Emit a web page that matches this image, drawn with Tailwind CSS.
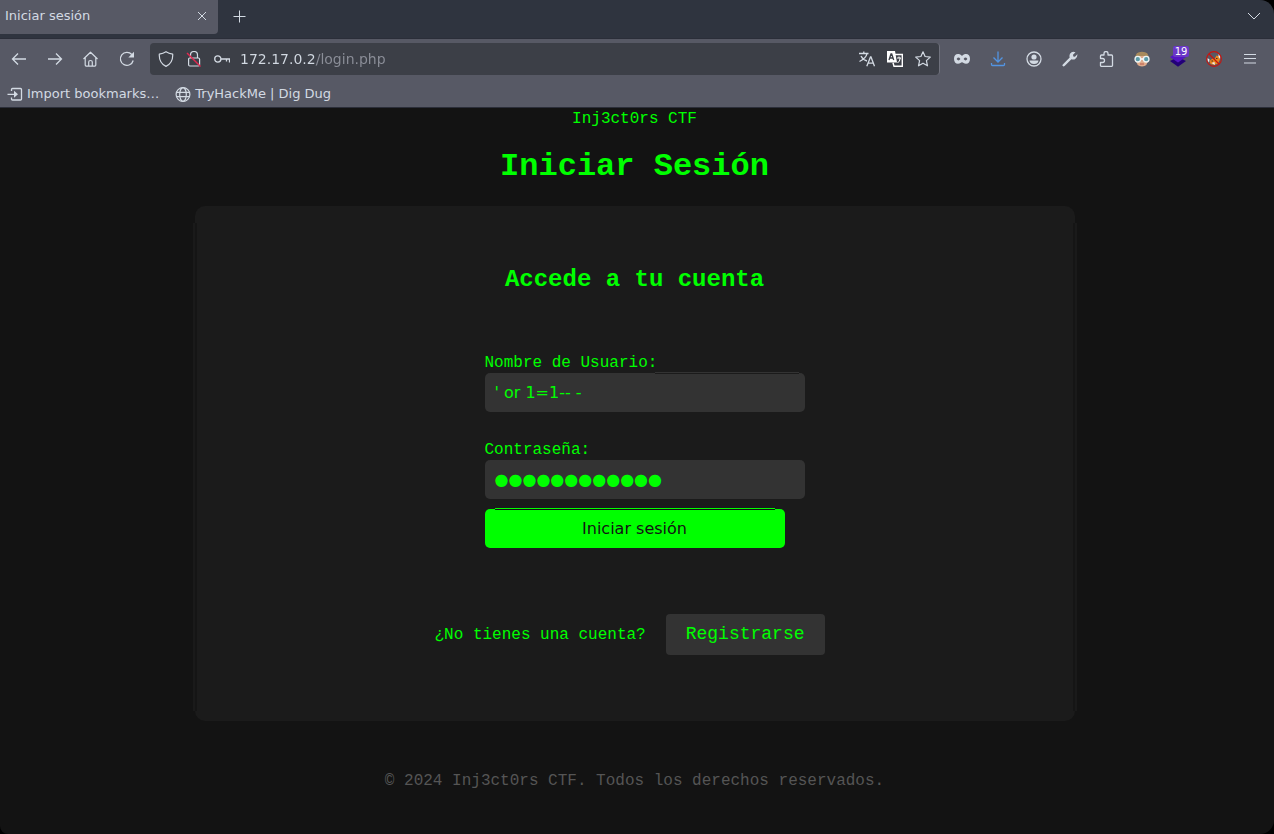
<!DOCTYPE html>
<html lang="es">
<head>
<meta charset="utf-8">
<meta name="viewport" content="width=device-width, initial-scale=1">
<title>Iniciar sesión</title>
<script src="https://cdn.jsdelivr.net/npm/@tailwindcss/browser@4"></script>
</head>
<body class="bg-black font-['DejaVu_Sans',sans-serif]">
<div class="flex min-h-screen flex-col overflow-hidden rounded-tr-[14px] rounded-br-[14px] rounded-bl-lg bg-[#131313]">

  <!-- Browser chrome -->
  <header class="text-[#d3dae3]">
    <div class="flex h-[39px] items-start border-b border-[#2b2e39] bg-[#2f343f]">
      <div class="flex h-[34px] w-[218px] items-center justify-between rounded-br bg-[#575965] pr-[11px] pb-[2px] pl-[5px] text-[13px]">
        <span>Iniciar sesión</span>
        <button type="button" aria-label="Cerrar pestaña">
          <svg class="size-[10px]" viewBox="0 0 10 10" fill="none" stroke="currentColor"><path d="M1 1l8 8M9 1L1 9"/></svg>
        </button>
      </div>
      <button type="button" aria-label="Nueva pestaña" class="ml-[15px] flex h-[33px] items-center">
        <svg class="size-[13px]" viewBox="0 0 13 13" fill="none" stroke="currentColor"><path d="M6.500 .5v12M.5 6.500h12"/></svg>
      </button>
      <button type="button" aria-label="Lista de pestañas" class="mr-[13px] ml-auto flex h-8 items-center">
        <svg class="size-[14px]" viewBox="0 0 14 14" fill="none" stroke="currentColor"><path d="M1 4l6 6 6-6"/></svg>
      </button>
    </div>

    <div class="border-b border-[#2b2e39] bg-[#575965]">
      <div class="flex h-[40px] items-center">
        <nav class="flex w-[150px] items-center gap-5 pl-[11px]" aria-label="Navegación">
          <button type="button" aria-label="Atrás"><svg class="size-4" viewBox="0 0 16 16" fill="none" stroke="currentColor" stroke-width="1.300"><path d="M15 8H1.500M7 2.500L1.500 8 7 13.500"/></svg></button>
          <button type="button" aria-label="Adelante"><svg class="size-4" viewBox="0 0 16 16" fill="none" stroke="currentColor" stroke-width="1.300"><path d="M1 8h13.500M9 2.500L14.500 8 9 13.500"/></svg></button>
          <button type="button" aria-label="Inicio"><svg class="size-4" viewBox="0 0 16 16" fill="none" stroke="currentColor" stroke-width="1.200" stroke-linejoin="round"><path d="M.5 8L7.500 1.200 14.500 8M2.200 6.800v7.300q0 1 1 1h8.600q1 0 1-1V6.800M5.700 15v-4q0-1.500 1.800-1.500T9.300 11v4"/></svg></button>
          <button type="button" aria-label="Recargar"><svg class="size-4" viewBox="0 0 16 16" fill="none" stroke="currentColor" stroke-width="1.300"><path d="M14.200 9.500A6.500 6.500 0 1 1 12.800 3.500"/><path d="M15 .8v5.700H9.300z" fill="currentColor" stroke="none"/></svg></button>
        </nav>

        <div class="flex h-8 flex-1 items-center rounded border-r border-[#70727d] bg-[#3c3f47] pr-2 pl-2">
          <svg class="size-4" viewBox="0 0 16 16" fill="none" stroke="currentColor" stroke-width="1.200" stroke-linejoin="round"><path d="M8 .7Q10.800 2.500 14.700 3.200C15 8.500 13 13 8 15.400 3 13 1 8.500 1.300 3.200Q5.200 2.500 8 .7z"/></svg>
          <svg class="ml-3 size-4" viewBox="0 0 16 16" fill="none" stroke="currentColor" stroke-width="1.200"><path d="M4.500 7V4a3.500 3.500 0 0 1 7 0v3"/><rect x="2.600" y="7" width="11" height="8" rx="1.200"/><path d="M1 2l13.500 13.500" stroke="#e22850" stroke-width="1.400"/></svg>
          <svg class="ml-3 size-4" viewBox="0 0 16 16" fill="none" stroke="currentColor" stroke-width="1.300"><circle cx="3.800" cy="8" r="3.100"/><path d="M7 8h8.500v3.500M12.500 8v2.500"/></svg>
          <input type="text" aria-label="Dirección" value="172.17.0.2/login.php" class="ml-[10px] min-w-0 flex-1 bg-[linear-gradient(90deg,#d3dae3_76px,#8b8e98_76px)] bg-clip-text text-[14px] text-transparent outline-none">
          <div class="flex items-center gap-3">
            <button type="button" aria-label="Traducir página"><svg class="size-4" viewBox="0 0 16 16" fill="none" stroke="currentColor" stroke-width="1.300"><path d="M0 2.500h9.500M4.800.5v2M2 5Q4 9 8 10M8 2.700Q7 7.500.5 10.500M7.800 15.300L11.500 6h.5l3.500 9.300M9 12.200h5.300"/></svg></button>
            <button type="button" aria-label="Traducir"><svg class="size-4" viewBox="0 0 16 16"><path d="M0 0h8l2 11.500H0z" fill="#fff"/><path d="M8 3.500h7.300v11.800H7l-1-3.500" fill="none" stroke="#fff" stroke-width="1.400"/><path d="M2 9l2-6h.7l2 6M2.800 7h3" fill="none" stroke="#3c3f47" stroke-width="1.300"/><path d="M10 7h4M12 5.500V7M10.500 12q2.500-1.500 2.700-5" fill="none" stroke="#fff"/></svg></button>
            <button type="button" aria-label="Guardar marcador"><svg class="size-4" viewBox="0 0 16 16" fill="none" stroke="currentColor" stroke-width="1.200" stroke-linejoin="round"><path d="M8 .8l2.100 4.700 5.200.6-3.900 3.500 1.100 5.200L8 12.200l-4.500 2.600 1.100-5.200L.7 6.100l5.200-.6z"/></svg></button>
          </div>
        </div>

        <div class="flex items-center gap-5 pr-4 pl-[14px]">
          <button type="button" aria-label="Privacidad"><svg class="size-4" viewBox="0 0 16 16" fill="currentColor" fill-rule="evenodd"><path d="M8 5C9.300 3.600 10.600 3 12 3 14.500 3 16 5 16 7.800c0 3-1.500 5-4 5-2 0-3-1.600-4-1.600s-2 1.600-4 1.600c-2.500 0-4-2-4-5C0 5 1.500 3 4 3 5.400 3 6.700 3.600 8 5zM2.600 8Q4.500 10.800 6.400 8 4.500 5.200 2.600 8zM9.600 8Q11.500 10.800 13.400 8 11.500 5.200 9.600 8z"/></svg></button>
          <button type="button" aria-label="Descargas"><svg class="size-4" viewBox="0 0 16 16" fill="none" stroke="#5294e2" stroke-width="1.300"><path d="M8 .5V11M3.500 6.500L8 11l4.500-4.500M1.500 12v1.500q0 1 1 1h11q1 0 1-1V12"/></svg></button>
          <button type="button" aria-label="Cuenta"><svg class="size-4" viewBox="0 0 16 16"><circle cx="8" cy="8" r="7" fill="none" stroke="currentColor" stroke-width="1.300"/><circle cx="8" cy="6" r="2.600" fill="currentColor"/><path d="M3.500 9.500h9Q12 13 8 13T3.500 9.500z" fill="currentColor"/></svg></button>
          <button type="button" aria-label="Herramientas"><svg class="size-4" viewBox="0 0 16 16"><path d="M13.500 1.200L11 3.800l.3 1.700 1.600.3 2.500-2.500Q15.600 7 13 8.200q-2 .8-3.600 0l-6.800 6.900q-1.200.8-1.900 0-.6-.8.1-1.700L7.700 6.600Q7 4.500 8.200 2.500 10-.2 13.500 1.200z" fill="currentColor"/></svg></button>
          <button type="button" aria-label="Extensiones"><svg class="size-4" viewBox="0 0 16 16" fill="none" stroke="currentColor" stroke-width="1.300" stroke-linejoin="round"><path d="M2.500 7.500V5q0-1 1-1H6V2.500a2 2 0 0 1 4 0V4h3.500q1 0 1 1v9.500q0 .8-.8.8H3.300q-.8 0-.8-.8v-3h2a2 2 0 0 0 0-4z"/></svg></button>
          <button type="button" aria-label="Perfil"><svg class="size-4" viewBox="0 0 16 16"><path d="M2 8Q2 15.500 8 15.500T14 8l-1-4H3z" fill="#e0ab8b"/><path d="M1.500 7Q1 .8 8 .8T14.500 7L12 5H4z" fill="#a88a5c"/><path d="M6 8h4" stroke="#fff" stroke-width="1.500"/><circle cx="3.800" cy="8.200" r="2.800" fill="#5b9ba8" stroke="#eef4f4" stroke-width="1.300"/><circle cx="12.200" cy="8.200" r="2.800" fill="#5b9ba8" stroke="#eef4f4" stroke-width="1.300"/><path d="M6 13h4" stroke="#b75b4d"/></svg></button>
          <button type="button" aria-label="Wappalyzer, 19" class="relative"><svg class="size-4" viewBox="0 0 16 16"><path d="M0 10l8-4 8 4-8 5.800z" fill="#230078"/><path d="M0 6l8-5 8 5-8 5.500z" fill="#5516c4"/></svg><span class="absolute -top-[5px] left-[3px] h-[11px] w-4 rounded-xs bg-[#6b38c8] text-center text-[10px] leading-[11px] text-white">19</span></button>
          <button type="button" aria-label="FoxyProxy desactivado"><svg class="size-4" viewBox="0 0 16 16"><path d="M3.500 10l3-2.500 2 .5 2-3.500 3 1 .5 3-2 4-4 1.500-3.500-1z" fill="#e9851d"/><path d="M1.500 7l2 1.500-.5 3-1.500-2zM12.500 3l2 2.500-.5 2.500-1.500-2zM5.500 12l3-1 .5 3z" fill="#eee"/><path d="M5.500 10h1.500M10 7.500h1.500" stroke="#4a3024" stroke-width="1.200"/><circle cx="8" cy="8" r="7.400" fill="none" stroke="#c8140e" stroke-width="1.100"/><path d="M3 3l10 10" stroke="#c8140e" stroke-width="1.200"/></svg></button>
          <button type="button" aria-label="Menú"><svg class="size-4" viewBox="0 0 16 16" fill="none" stroke="currentColor" stroke-width="1.200"><path d="M2 3.500h12M2 7.500h12M2 12h12"/></svg></button>
        </div>
      </div>

      <nav class="flex h-7 items-center gap-4 pt-px pl-[7px] text-[13px]" aria-label="Marcadores">
        <a href="#" class="flex items-center gap-1"><svg class="size-4" viewBox="0 0 16 16" fill="none" stroke="currentColor" stroke-width="1.300"><path d="M4.500 5V3.500q0-1 1-1h8q1 0 1 1v9.500q0 1-1 1h-8q-1 0-1-1v-1.500M.5 8.300H8"/><path d="M7 4.800l4 3.500-4 3.500z" fill="currentColor" stroke="none"/></svg>Import bookmarks…</a>
        <a href="#" class="flex items-center gap-1"><svg class="size-4" viewBox="0 0 16 16" fill="none" stroke="currentColor" stroke-width="1.200"><circle cx="8" cy="8.500" r="6.900"/><ellipse cx="8" cy="8.500" rx="3.300" ry="6.900"/><path d="M1.500 6.300h13M1.500 10.700h13"/></svg>TryHackMe | Dig Dug</a>
      </nav>
    </div>
  </header>

  <!-- Page -->
  <div class="flex flex-1 flex-col items-center pt-px pr-[5px] font-['Liberation_Mono',monospace] text-[16px] leading-5 text-[#00ff00]">
    <p>Inj3ct0rs CTF</p>
    <h1 class="mt-5 text-[32px] leading-9 font-bold">Iniciar Sesión</h1>

    <main class="relative mt-[21px] flex w-full max-w-[880px] flex-col items-center rounded-[10px] bg-[#1b1b1b] pt-[60px] pb-[66px]">
      <span class="absolute top-[17px] bottom-[10px] -left-[2px] w-1 border-r-2 border-l-2 border-r-[#151515] border-l-[#1a1a1a]"></span>
      <span class="absolute top-[17px] -right-[2px] bottom-[10px] w-1 border-r-2 border-l-2 border-r-[#1a1a1a] border-l-[#151515]"></span>
      <h2 class="text-[24px] leading-7 font-bold">Accede a tu cuenta</h2>

      <form class="mt-[57px] flex w-[300px] flex-col items-start">
        <label for="user" class="pt-[2px]">Nombre de Usuario:</label>
        <div class="relative">
          <input id="user" type="text" value="' or 1=1-- -" class="block h-[39px] w-[320px] rounded-[5px] bg-[#333333] px-[10px] font-['DejaVu_Sans',sans-serif] outline-none">
          <span class="absolute -top-px right-[6px] left-[170px] h-[2px] border-t border-[#333333] bg-[#1b1b1b]"></span>
        </div>
        <label for="pass" class="mt-[26px] pt-[2px]">Contraseña:</label>
        <div class="relative font-['DejaVu_Sans',sans-serif]">
          <input id="pass" type="password" value="' or 1=1-- -" class="block h-[39px] w-[320px] rounded-[5px] bg-[#333333] px-[10px] text-transparent outline-none">
          <span aria-hidden="true" class="pointer-events-none absolute inset-0 px-[10px] leading-[39px]">●●●●●●●●●●●●</span>
        </div>
        <button type="submit" class="relative mt-[10px] h-[39px] w-full rounded-[5px] bg-[#00ff00] font-['DejaVu_Sans',sans-serif] text-[#131313]">Iniciar sesión<span class="absolute inset-x-[10px] -top-px h-[2px] border-t border-[#00ff00] bg-[#131313]"></span></button>
      </form>

      <div class="mt-[66px] flex items-center gap-5 pr-[10px]">
        <p>¿No tienes una cuenta?</p>
        <a href="#" class="flex h-[41px] items-center rounded bg-[#333333] px-5 pb-[2px] text-[18px]">Registrarse</a>
      </div>
    </main>

    <footer class="mt-[50px] text-[#555555]">© 2024 Inj3ct0rs CTF. Todos los derechos reservados.</footer>
  </div>
</div>
</body>
</html>
